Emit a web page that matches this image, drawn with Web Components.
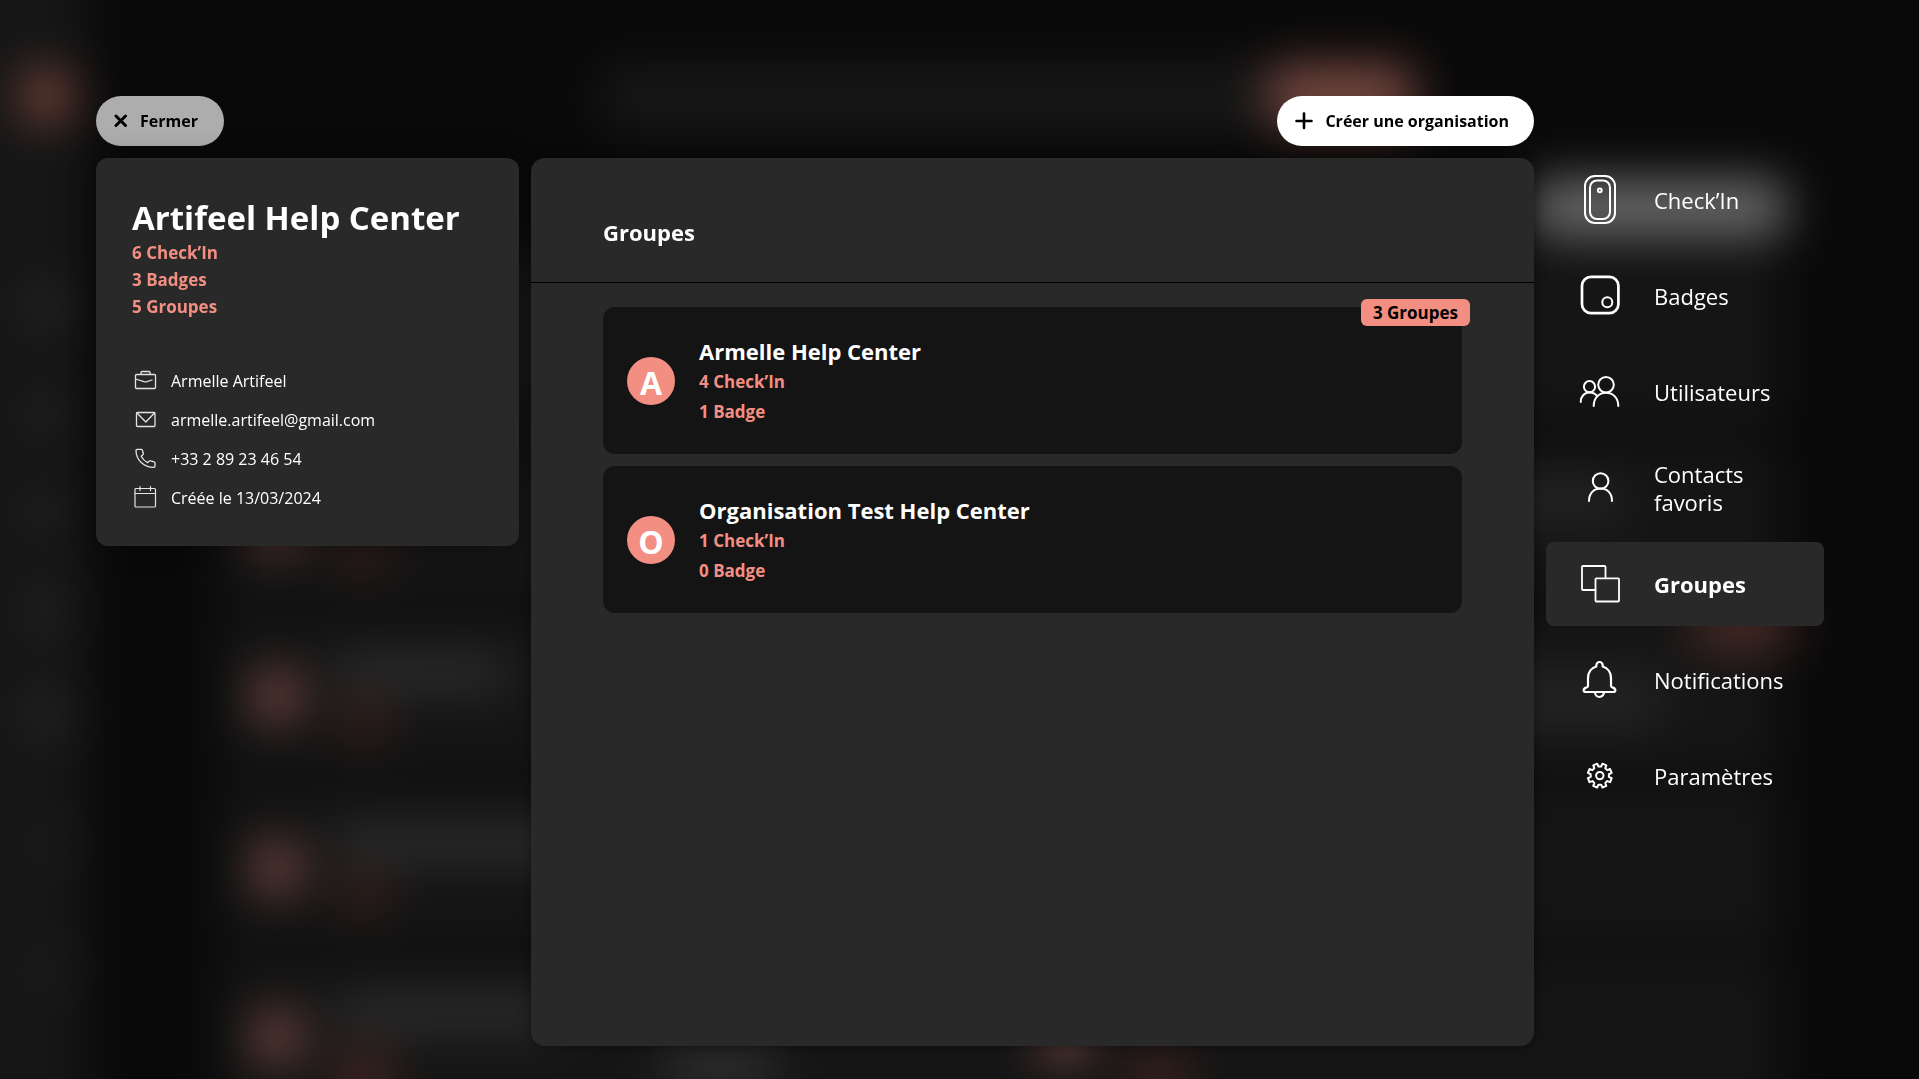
<!DOCTYPE html>
<html lang="fr">
<head>
<meta charset="utf-8">
<meta name="viewport" content="width=device-width, initial-scale=1">
<title>Groupes</title>
<style>
  html { --panel: #292929; --card: #141414; --coral: #f38f82; background: #090909; }
  body { margin: 0; color: #fff; font: 400 16px/24px "Open Sans", "Noto Sans", sans-serif; }
</style>
</head>
<body>
<org-page></org-page>

<script>
const define = (name, html, setup) => {
  const tpl = document.createElement('template');
  tpl.innerHTML = html;
  customElements.define(name, class extends HTMLElement {
    connectedCallback() {
      if (this.shadowRoot) return;
      const root = this.attachShadow({ mode: 'open' });
      root.append(tpl.content.cloneNode(true));
      if (setup) setup(this, root);
    }
  });
};

/* Gear outline with eight rounded teeth and a notch at the top */
const gear = (cx, cy, ro, ri) => {
  const pts = [];
  for (let k = 0; k < 8; k++) {
    for (const [off, r] of [[-14, ri], [-10, ro], [10, ro], [14, ri]]) {
      const a = (k * 45 + 22.5 + off) * Math.PI / 180;
      pts.push((cx + r * Math.sin(a)).toFixed(2) + ' ' + (cy - r * Math.cos(a)).toFixed(2));
    }
  }
  return 'M' + pts.join('L') + 'z';
};

const ICONS = {
  close: ['14 14', 3, '<path d="M2 2l9.500 9.500M11.500 2L2 11.500"/>'],
  plus: ['18 18', 2.6, '<path d="M9 1.500v14.500M1.500 9h15"/>'],
  briefcase: ['27 26', 1.3, '<rect x="3.500" y="5.500" width="20" height="14" rx="1"/><path d="M9 5V3.500a1 1 0 0 1 1-1h7a1 1 0 0 1 1 1V5M3.500 10l8.500 2.600q1.500.4 3 0l5-1.600"/>'],
  mail: ['27 26', 1.3, '<rect x="4.500" y="4.500" width="18.500" height="14" rx="1"/><path d="M5 5l8.800 9L22.500 5"/>'],
  phone: ['27 26', 1.3, '<path d="M4 3.500c0-.8.5-1.200 1.200-1.200h4c.6 0 1 .4 1.200 1l.9 3.200c.1.6 0 1-.4 1.300L9.200 9.300c1.500 3 3.600 5 6.400 6.400l1.600-1.600c.4-.4.9-.5 1.400-.3l3.400 1.100c.7.2 1 .6 1 1.200v3c0 .8-.5 1.300-1.300 1.300C12 20.400 4 13 4 3.500z"/>'],
  calendar: ['27 26', 1.2, '<rect x="3" y="2.500" width="20.500" height="18.500" rx="1"/><path d="M3 7.500h20.500M8 .600v4M18.500 .600v4"/>'],
  checkin: ['42 50', 2, '<rect x="6" y="1" width="30" height="47" rx="10"/><rect x="11" y="5.500" width="20" height="38.500" rx="7"/><circle cx="20.800" cy="15.300" r="1.900"/>'],
  badge: ['42 50', 2.7, '<rect x="3" y="5.800" width="36.400" height="36.400" rx="9"/><circle cx="28.300" cy="31.300" r="5" stroke-width="2"/>'],
  users: ['42 50', 2, '<circle cx="27" cy="17.700" r="7.800"/><circle cx="10.500" cy="19.700" r="5.600"/><path d="M14.700 39C14.700 31 20 25.800 27 25.800S39.300 31 39.300 39M1.700 35c0-5.500 3.500-9.400 8.800-9.400 3.400 0 6 1.200 7.500 3.600"/>'],
  user: ['42 50', 2, '<circle cx="21.600" cy="18" r="7.800"/><path d="M10 38C10 30.200 14.800 25.600 21.600 25.600S33 30.200 33 38"/>'],
  groups: ['42 50', 1.8, '<rect x="16.500" y="19.300" width="23.500" height="23.200" rx="1"/><path d="M16.500 31H4a1 1 0 0 1-1-1V8a1 1 0 0 1 1-1h21.500a1 1 0 0 1 1 1v11"/>'],
  bell: ['42 50', 2.2, '<path d="M17.300 11.500v-1.300a3.200 3.200 0 0 1 6.400 0v1.300c5 1.500 8.300 6 8.300 11.500v8c0 1 .8 1.300 1.800 1.600 3.500 1 3.200 4.400.2 4.400H7c-3 0-3.300-3.400.2-4.400 1-.3 1.800-.6 1.800-1.600V23c0-5.500 3.300-10 8.300-11.500zM16 37.200a4.500 4.800 0 0 0 9 0"/>'],
  gear: ['42 50', 2, '<path d="' + gear(20.8, 24.6, 12.2, 9.2) + '"/><circle cx="20.800" cy="24.600" r="3.700"/>']
};

define('ui-icon', `
<style>:host { display: block; flex: none; } svg { display: block; fill: none; stroke: currentColor; stroke-linecap: round; stroke-linejoin: round; }</style>
<svg aria-hidden="true"></svg>`, (el, root) => {
  const [size, width, body] = ICONS[el.getAttribute('name')];
  const [w, h] = size.split(' ');
  const svg = root.querySelector('svg');
  svg.setAttribute('viewBox', '0 0 ' + size);
  svg.setAttribute('width', w);
  svg.setAttribute('height', h);
  svg.setAttribute('stroke-width', width);
  svg.innerHTML = body;
});

/* Places the icon named by the host in front of its slotted label */
const addIcon = (el, root) => {
  const icon = document.createElement('ui-icon');
  icon.setAttribute('name', el.getAttribute('icon'));
  root.querySelector('slot').before(icon);
};

define('pill-button', `
<style>
  :host { display: block; }
  button { display: flex; align-items: center; gap: 12px; height: 50px; min-width: 128px; padding: 0 25px 0 18px; border: 0; border-radius: 25px; background: var(--pill, #fff); color: #000; font: 700 16px/24px "Open Sans", "Noto Sans", sans-serif; white-space: nowrap; cursor: pointer; }
</style>
<button type="button"><slot></slot></button>`, addIcon);

define('contact-line', `
<style>
  :host { display: flex; align-items: center; gap: 12px; line-height: 39px; }
  ui-icon { color: #e4e4e4; }
</style>
<slot></slot>`, addIcon);

define('org-card', `
<style>
  :host { display: block; padding: 39px 36px 28px; border-radius: 12px; background: var(--panel); box-shadow: 0 0 24px rgba(0,0,0,.4); }
  h1 { margin: 0; font-size: 33px; line-height: 42px; font-weight: 700; }
  .stats { margin: 0 0 42px; padding: 0; list-style: none; color: var(--coral); font-size: 17px; line-height: 27px; font-weight: 700; }
</style>
<h1>Artifeel Help Center</h1>
<ul class="stats"><li>6 Check’In</li><li>3 Badges</li><li>5 Groupes</li></ul>
<contact-line icon="briefcase">Armelle Artifeel</contact-line>
<contact-line icon="mail">armelle.artifeel@gmail.com</contact-line>
<contact-line icon="phone">+33 2 89 23 46 54</contact-line>
<contact-line icon="calendar">Créée le 13/03/2024</contact-line>`);

define('group-card', `
<style>
  :host { display: flex; align-items: center; gap: 24px; position: relative; box-sizing: border-box; min-height: 147px; padding: 24px; border-radius: 12px; background: var(--card); }
  .avatar { flex: none; width: 48px; height: 48px; border-radius: 50%; background: var(--coral); font-size: 32px; line-height: 52px; font-weight: 700; text-align: center; }
  h3 { margin: 0; font-size: 22px; line-height: 32px; font-weight: 700; }
  .stats { color: var(--coral); font-size: 17px; line-height: 30px; font-weight: 700; }
  ::slotted(p) { margin: 0; }
  ::slotted([slot=tag]) { position: absolute; top: -8px; right: -8px; padding: 0 12px; border-radius: 6px; background: var(--coral); color: #000; font-size: 17px; line-height: 27px; font-weight: 700; }
</style>
<div class="avatar"></div>
<div><h3></h3><div class="stats"><slot></slot></div></div>
<slot name="tag"></slot>`, (el, root) => {
  const name = el.getAttribute('name');
  root.querySelector('.avatar').textContent = name[0];
  root.querySelector('h3').textContent = name;
});

define('groups-panel', `
<style>
  :host { display: block; border-radius: 14px; background: var(--panel); box-shadow: 0 0 12px rgba(0,0,0,.4); }
  header { padding: 60px 72px 36px; border-bottom: 1px solid #000; }
  h2 { margin: 0; font-size: 22px; line-height: 28px; font-weight: 700; }
  .list { display: grid; gap: 12px; padding: 24px 72px; }
</style>
<header><h2>Groupes</h2></header>
<div class="list">
  <group-card name="Armelle Help Center"><p>4 Check’In</p><p>1 Badge</p><span slot="tag">3 Groupes</span></group-card>
  <group-card name="Organisation Test Help Center"><p>1 Check’In</p><p>0 Badge</p></group-card>
</div>`);

define('nav-item', `
<style>
  :host { display: block; }
  a { display: flex; align-items: center; gap: 33px; box-sizing: border-box; min-height: 84px; padding: 0 24px 0 33px; border-radius: 8px; color: #fff; font-size: 22px; line-height: 28px; text-decoration: none; }
  :host([current]) a { background: var(--panel); font-weight: 700; }
</style>
<a href="#"><slot></slot></a>`, (el, root) => {
  addIcon(el, root);
  if (el.hasAttribute('current')) root.querySelector('a').setAttribute('aria-current', 'page');
});

define('side-nav', `
<style>:host { display: block; } nav { display: grid; gap: 12px; }</style>
<nav>
  <nav-item icon="checkin">Check’In</nav-item>
  <nav-item icon="badge">Badges</nav-item>
  <nav-item icon="users">Utilisateurs</nav-item>
  <nav-item icon="user">Contacts favoris</nav-item>
  <nav-item icon="groups" current>Groupes</nav-item>
  <nav-item icon="bell">Notifications</nav-item>
  <nav-item icon="gear">Paramètres</nav-item>
</nav>`);

/* Out-of-focus application behind the dialog */
define('blurred-backdrop', `
<style>
  :host { position: fixed; inset: 0; z-index: -1; overflow: hidden; }
  svg { display: block; width: 100%; height: 100%; }
</style>
<svg viewBox="0 0 1919 1079" preserveAspectRatio="none" aria-hidden="true">
  <defs><filter id="b" filterUnits="userSpaceOnUse" x="-100" y="-100" width="2119" height="1279" color-interpolation-filters="sRGB"><feGaussianBlur stdDeviation="24"/></filter></defs>
  <g filter="url(#b)">
    <rect x="-200" y="-200" width="2319" height="1479" fill="#090909"/>
    <rect x="-200" y="-200" width="289" height="1479" fill="#161616"/>
    <circle cx="47" cy="96" r="25" fill="#8a4c40"/>
    <g fill="#2e2e2e">
      <circle cx="47" cy="306" r="18"/><circle cx="47" cy="414" r="14"/><circle cx="47" cy="512" r="14"/>
      <circle cx="47" cy="611" r="16"/><circle cx="47" cy="714" r="18"/>
    </g>
    <g fill="#1e1e1e"><circle cx="47" cy="842" r="18"/><circle cx="47" cy="970" r="20"/></g>
    <rect x="600" y="64" width="680" height="66" rx="20" fill="#171717"/>
    <rect x="1268" y="66" width="146" height="60" rx="16" fill="#7c4b43"/>
    <g fill="#151515">
      <rect x="220" y="252" width="1560" height="172"/><rect x="220" y="445" width="1560" height="151"/>
      <rect x="220" y="616" width="1560" height="151"/><rect x="220" y="788" width="1560" height="151"/>
      <rect x="220" y="959" width="1560" height="200"/>
    </g>
    <rect x="1530" y="180" width="256" height="56" rx="16" fill="#6c6c6c"/>
    <g fill="#0c0c0c">
      <rect x="220" y="596" width="1560" height="20"/><rect x="220" y="767" width="1560" height="21"/><rect x="220" y="939" width="1560" height="20"/>
    </g>
    <g fill="#7c4b46">
      <circle cx="277" cy="525" r="25"/><circle cx="277" cy="696" r="25"/><circle cx="277" cy="868" r="25"/><circle cx="277" cy="1037" r="25"/><circle cx="1065" cy="1037" r="25"/>
    </g>
    <g fill="#343434">
      <rect x="335" y="659" width="170" height="28"/><rect x="335" y="829" width="250" height="28"/><rect x="335" y="1000" width="230" height="28"/>
      <rect x="665" y="1050" width="110" height="36"/>
      <rect x="1450" y="478" width="170" height="44" fill="#242424"/><rect x="1430" y="668" width="230" height="62" fill="#232323"/>
    </g>
    <g fill="#3a211d">
      <rect x="340" y="532" width="46" height="38"/><rect x="340" y="702" width="46" height="38"/><rect x="340" y="874" width="46" height="38"/>
      <rect x="335" y="1050" width="56" height="60" fill="#402420"/><rect x="1130" y="1050" width="56" height="60"/>
    </g>
    <rect x="1690" y="602" width="104" height="46" rx="16" fill="#4c2c28"/>
  </g>
</svg>`);

define('org-page', `
<style>
  :host { display: flex; flex-direction: column; gap: 12px; box-sizing: border-box; min-height: 100vh; padding: 96px 95px 33px 96px; }
  .body, .actions { display: grid; grid-template-columns: minmax(0, 423fr) minmax(0, 1003fr) minmax(0, 278fr); gap: 12px; }
  .body { flex: 1; }
  .actions pill-button { justify-self: start; }
  .actions pill-button + pill-button { justify-self: end; }
  .close { --pill: #adadad; }
  org-card, side-nav { align-self: start; }
</style>
<blurred-backdrop></blurred-backdrop>
<div class="actions">
  <pill-button class="close" icon="close">Fermer</pill-button>
  <pill-button icon="plus">Créer une organisation</pill-button>
</div>
<div class="body">
  <org-card></org-card>
  <groups-panel></groups-panel>
  <side-nav></side-nav>
</div>`);
</script>
</body>
</html>
